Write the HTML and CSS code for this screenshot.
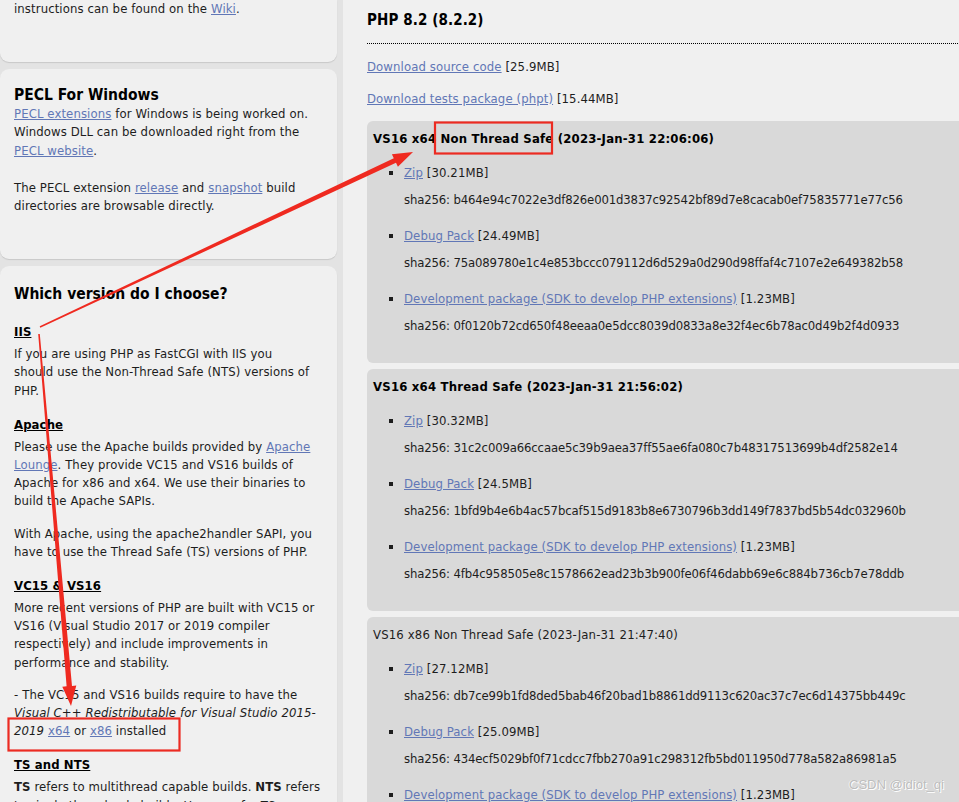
FILE: index.html
```html
<!DOCTYPE html>
<html lang="en">
<head>
<meta charset="utf-8">
<title>PHP For Windows: Binaries and sources Releases</title>
<link rel="stylesheet" href="styles.css">
</head>
<body>
<div class="page">
  <aside class="sidebar">
    <section class="box box-cut">
      <p class="last">instructions can be found on the <a href="#">Wiki</a>.</p>
    </section>
    <section class="box">
      <h3 class="box-title">PECL For Windows</h3>
      <p class="gap"><a href="#">PECL extensions</a> for Windows is being worked on.<br>Windows DLL can be downloaded right from the<br><a href="#">PECL website</a>.</p>
      <p class="last">The PECL extension <a href="#">release</a> and <a href="#">snapshot</a> build<br>directories are browsable directly.</p>
    </section>
    <section class="box box-long">
      <h3 class="box-title big">Which version do I choose?</h3>
      <h4 class="sub">IIS</h4>
      <p>If you are using PHP as FastCGI with IIS you<br>should use the Non-Thread Safe (NTS) versions of<br>PHP.</p>
      <h4 class="sub">Apache</h4>
      <p>Please use the Apache builds provided by <a href="#">Apache<br>Lounge</a>. They provide VC15 and VS16 builds of<br>Apache for x86 and x64. We use their binaries to<br>build the Apache SAPIs.</p>
      <p>With Apache, using the apache2handler SAPI, you<br>have to use the Thread Safe (TS) versions of PHP.</p>
      <h4 class="sub">VC15 &amp; VS16</h4>
      <p>More recent versions of PHP are built with VC15 or<br>VS16 (Visual Studio 2017 or 2019 compiler<br>respectively) and include improvements in<br>performance and stability.</p>
      <p>- The VC15 and VS16 builds require to have the<br><em>Visual C++ Redistributable for Visual Studio 2015-<br>2019</em> <a href="#">x64</a> or <a href="#">x86</a> installed</p>
      <h4 class="sub">TS and NTS</h4>
      <p><strong>TS</strong> refers to multithread capable builds. <strong>NTS</strong> refers<br>to single thread only builds. Use case for TS binaries</p>
    </section>
  </aside>

  <main class="main">
    <h2 class="release-title">PHP 8.2 (8.2.2)</h2>
    <p class="dl"><a href="#">Download source code</a> [25.9MB]</p>
    <p class="dl"><a href="#">Download tests package (phpt)</a> [15.44MB]</p>

    <div class="build">
      <h4 class="build-title">VS16 x64 Non Thread Safe (2023-Jan-31 22:06:06)</h4>
      <ul class="files">
        <li><a href="#">Zip</a> [30.21MB]<span class="sha">sha256: b464e94c7022e3df826e001d3837c92542bf89d7e8cacab0ef75835771e77c56</span></li>
        <li><a href="#">Debug Pack</a> [24.49MB]<span class="sha">sha256: 75a089780e1c4e853bccc079112d6d529a0d290d98ffaf4c7107e2e649382b58</span></li>
        <li><a href="#">Development package (SDK to develop PHP extensions)</a> [1.23MB]<span class="sha">sha256: 0f0120b72cd650f48eeaa0e5dcc8039d0833a8e32f4ec6b78ac0d49b2f4d0933</span></li>
      </ul>
    </div>

    <div class="build">
      <h4 class="build-title">VS16 x64 Thread Safe (2023-Jan-31 21:56:02)</h4>
      <ul class="files">
        <li><a href="#">Zip</a> [30.32MB]<span class="sha">sha256: 31c2c009a66ccaae5c39b9aea37ff55ae6fa080c7b48317513699b4df2582e14</span></li>
        <li><a href="#">Debug Pack</a> [24.5MB]<span class="sha">sha256: 1bfd9b4e6b4ac57bcaf515d9183b8e6730796b3dd149f7837bd5b54dc032960b</span></li>
        <li><a href="#">Development package (SDK to develop PHP extensions)</a> [1.23MB]<span class="sha">sha256: 4fb4c958505e8c1578662ead23b3b900fe06f46dabb69e6c884b736cb7e78ddb</span></li>
      </ul>
    </div>

    <div class="build">
      <h4 class="build-title plain">VS16 x86 Non Thread Safe (2023-Jan-31 21:47:40)</h4>
      <ul class="files">
        <li><a href="#">Zip</a> [27.12MB]<span class="sha">sha256: db7ce99b1fd8ded5bab46f20bad1b8861dd9113c620ac37c7ec6d14375bb449c</span></li>
        <li><a href="#">Debug Pack</a> [25.09MB]<span class="sha">sha256: 434ecf5029bf0f71cdcc7fbb270a91c298312fb5bd011950d778a582a86981a5</span></li>
        <li><a href="#">Development package (SDK to develop PHP extensions)</a> [1.23MB]</li>
      </ul>
    </div>
  </main>
</div>

<svg class="annot" width="959" height="802" viewBox="0 0 959 802" aria-hidden="true">
  <rect x="435" y="122.5" width="117" height="31" fill="none" stroke="#ec2b22" stroke-width="2.2"/>
  <rect x="8.5" y="718.5" width="171" height="32" fill="none" stroke="#ec2b22" stroke-width="2.2"/>
  <polygon fill="#ef2a20" points="40.3,327.7 396,162.8 397.9,166.8 413,152 391.9,154.2 393.8,158.2 39.7,326.3"/>
  <polygon fill="#ef2a20" points="39.8,333.9 72,685.9 76.3,685.5 71,706 62.3,686.7 66.6,686.3 38.2,334.1"/>
</svg>
<div class="watermark">CSDN @idiot_qi</div>
</body>
</html>
```

FILE: styles.css
```css
html, body {
  margin: 0;
  padding: 0;
  height: 100%;
  overflow: hidden;
}
body {
  background: #e3e3e3;
  font-family: "DejaVu Sans Condensed", "DejaVu Sans", sans-serif;
  font-size: 13px;
  letter-spacing: 0.1px;
  color: #1d1d1d;
  position: relative;
}
a {
  color: #6177b6;
  text-decoration: underline;
}
.page {
  display: flex;
  gap: 6px;
  align-items: flex-start;
  width: 1100px;
}
.sidebar {
  width: 337px;
  flex: none;
  display: flex;
  flex-direction: column;
  gap: 7px;
}
.box {
  background: #f0f0f0;
  border-radius: 9px;
  padding: 16px 14px;
  box-shadow: 0 1px 1px rgba(0,0,0,0.12);
}
.box-cut {
  border-radius: 0 0 9px 9px;
  padding-top: 0;
}
.box-cut p {
  margin-top: -3px;
}
.box-cut p.last {
  margin-bottom: 27px;
}
.box-long {
  padding-top: 17px;
  padding-bottom: 40px;
}
.box p {
  margin: 0 0 14px;
  line-height: 18.2px;
}
.box p.gap {
  margin-bottom: 19px;
}
.box p.last {
  margin-bottom: 28px;
}
.box-title {
  margin: 0;
  font-size: 15.5px;
  line-height: 20px;
  font-weight: bold;
  letter-spacing: 0;
  color: #000;
}
.box-title.big {
  line-height: 22px;
}
.sub {
  margin: 16px 0 4px;
  font-size: 13px;
  line-height: 18px;
  font-weight: bold;
  text-decoration: underline;
  color: #000;
}
.box-title + .sub {
  margin-top: 18px;
}
em {
  font-style: italic;
}

.main {
  flex: 1;
  background: #f0f0f0;
  padding: 10px 0 0 24px;
  min-height: 900px;
}
.release-title {
  margin: 0;
  font-size: 15px;
  line-height: 20px;
  font-weight: bold;
  letter-spacing: 0.1px;
  color: #000;
  padding-bottom: 13px;
  border-bottom: 1px dotted #000;
}
.dl {
  margin: 14px 0 0;
  line-height: 18px;
}
.build {
  background: #d9d9d9;
  border-radius: 6px;
  padding: 9px 6px 10px;
  margin: 13px 0 6px;
}
.build + .build {
  margin-top: 0;
}
.build-title {
  margin: 0;
  font-size: 13px;
  line-height: 18px;
  font-weight: bold;
  letter-spacing: 0.2px;
  color: #000;
}
.build-title.plain {
  font-weight: normal;
  letter-spacing: 0.15px;
  color: #1d1d1d;
}
.files {
  list-style: square;
  margin: 16px 0 0;
  padding-left: 31px;
}
.files li {
  line-height: 18px;
  margin-bottom: 18px;
}
.sha {
  display: block;
  margin-top: 9px;
  white-space: nowrap;
  letter-spacing: -0.15px;
}

.annot {
  position: absolute;
  left: 0;
  top: 0;
  pointer-events: none;
}
.watermark {
  position: absolute;
  left: 849px;
  top: 777px;
  font-family: "Liberation Sans", Arial, sans-serif;
  font-size: 13px;
  letter-spacing: 0;
  color: #bdbdbd;
  text-shadow: 1px 1px 0 #ffffff, -1px 0 0 rgba(255,255,255,0.6);
}
```
